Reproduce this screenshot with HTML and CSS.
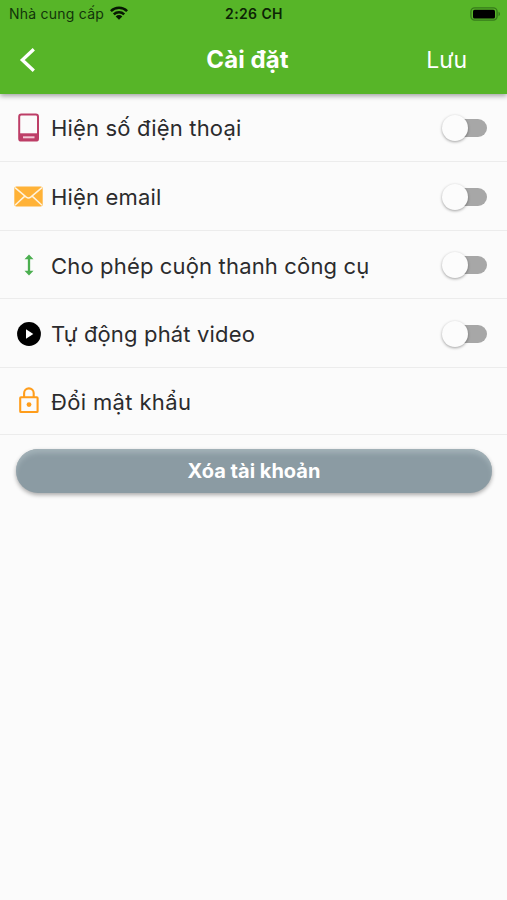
FILE: index.html
```html
<!DOCTYPE html>
<html lang="vi">
<head>
<meta charset="utf-8">
<title>Cài đặt</title>
<link rel="stylesheet" href="styles.css">
</head>
<body>
<header class="header">
  <div class="status">
    <div class="carrier">
      <span>Nhà cung cấp</span>
      <svg class="wifi" viewBox="0 0 18 14" width="18" height="14"><g fill="none" stroke="#071803" stroke-width="2.5"><path d="M.9 5.2a11.5 11.5 0 0 1 16.2 0"/><path d="M3.8 8.3a7.4 7.4 0 0 1 10.4 0"/></g><path fill="#071803" d="M5.7 10.4a4.7 4.7 0 0 1 6.6 0L9 13.7z"/></svg>
    </div>
    <span class="time">2:26 CH</span>
    <svg class="battery" viewBox="0 0 31 14" width="31" height="14"><rect x=".9" y=".9" width="26.2" height="12.2" rx="3.8" fill="none" stroke="#377b1b" stroke-width="1.4"/><rect x="3" y="2.7" width="22" height="8.8" rx="1.6"/><path fill="#377b1b" d="M28.5 4.8c2 .7 2 3.7 0 4.4z"/></svg>
  </div>
  <div class="nav">
    <svg class="back" viewBox="0 0 18 26" width="18" height="26"><path d="M15.8 2.2 4.3 13l11.5 10.8" fill="none" stroke="#fff" stroke-width="3.3"/></svg>
    <h1 class="title">Cài đặt</h1>
    <span class="save">Lưu</span>
  </div>
</header>
<main>
  <ul class="list">
    <li class="row first">
      <svg class="icon" viewBox="0 0 30 30" width="30" height="30"><rect x="5.2" y="1.6" width="18.8" height="26" rx="2.2" fill="none" stroke="#bd3e67" stroke-width="2"/><path fill="#bd3e67" d="M5 20.3h19.2v7.3H5z"/><path fill="#f3c9d6" d="M9 23.3h11.5v2H9z"/></svg>
      <span class="label">Hiện số điện thoại</span><span class="switch"></span>
    </li>
    <li class="row">
      <svg class="icon" viewBox="0 0 30 30" width="30" height="30"><rect x=".3" y="4.6" width="28.4" height="19.8" rx="2" fill="#ffb237"/><path d="m1 5.7 11.3 9.4q2.2 1.7 4.4 0L28 5.7M1 23.3l9.8-9.2M28 23.3l-9.8-9.2" fill="none" stroke="#fff3dc" stroke-width="1.5"/></svg>
      <span class="label">Hiện email</span><span class="switch"></span>
    </li>
    <li class="row mid">
      <svg class="icon" viewBox="0 0 30 30" width="30" height="30"><path d="M15 6v16" stroke="#4caf50" stroke-width="2.3"/><path fill="#4caf50" d="m15 3.5 4.5 4.7h-9zM15 24.5l4.5-4.7h-9z"/></svg>
      <span class="label">Cho phép cuộn thanh công cụ</span><span class="switch"></span>
    </li>
    <li class="row">
      <svg class="icon" viewBox="0 0 30 30" width="30" height="30"><circle cx="15" cy="15" r="11.9"/><path fill="#fff" d="M12 10.3v9.4l7.3-4.7z"/></svg>
      <span class="label">Tự động phát video</span><span class="switch"></span>
    </li>
    <li class="row last">
      <svg class="icon" viewBox="0 0 30 30" width="30" height="30"><g fill="none" stroke="#ff9d1b" stroke-width="2.1"><rect x="6.2" y="10.3" width="17.4" height="14.7" rx=".8"/><path d="M10.1 10V6.2a4.8 4.8 0 0 1 9.6 0V10"/></g><circle cx="15" cy="17.6" r="2.4" fill="#ff9d1b"/></svg>
      <span class="label">Đổi mật khẩu</span>
    </li>
  </ul>
  <button class="delete" type="button"><span>Xóa tài khoản</span></button>
</main>
</body>
</html>
```
FILE: styles.css
```css
* { box-sizing: border-box; }
body {
  margin: 0;
  min-height: 900px;
  background: #fbfbfb;
  font-family: Inter, "Noto Sans", sans-serif;
  color: #2b2b2d;
}
svg { display: block; flex: none; }
.header {
  position: relative;
  height: 94px;
  background: #57b528;
  box-shadow: 0 2px 5px rgba(0, 0, 0, .36);
}
.status {
  display: grid;
  grid-template-columns: 1fr auto 1fr;
  align-items: center;
  height: 27px;
  padding: 0 6px 0 9px;
  font-size: 14px;
  color: #12340a;
}
.carrier { display: flex; align-items: center; gap: 6px; letter-spacing: .23px; }
.wifi { margin-top: -2px; }
.time { margin-right: 2px; font-weight: 600; letter-spacing: .4px; color: #0c2405; }
.battery { justify-self: end; }
.nav {
  display: grid;
  grid-template-columns: 1fr auto 1fr;
  align-items: center;
  height: 66px;
  padding: 0 40px 0 18px;
  color: #fff;
}
.title { margin: 0 0 0 10px; font-size: 24px; font-weight: 700; line-height: 30px; letter-spacing: .1px; }
.save { justify-self: end; font-size: 23px; line-height: 30px; }
.list { margin: 0; padding: 0; list-style: none; }
.row {
  display: flex;
  align-items: center;
  height: 69px;
  padding: 0 20px 0 14px;
  border-bottom: 1px solid #ececec;
}
.row.first { height: 68px; }
.row.mid { height: 68px; }
.row.last { height: 67px; }
.row:nth-child(n + 2) { padding-top: 2px; }
.row:nth-child(n + 2) .switch { margin-top: -1px; }
.label { margin-left: 7px; font-size: 22px; line-height: 30px; letter-spacing: .16px; white-space: nowrap; }
.last .label { letter-spacing: .35px; }
.switch {
  position: relative;
  width: 41px;
  height: 18px;
  margin: 0 .5px 0 auto;
  border-radius: 9px;
  background: #a7a7a7;
}
.switch::before {
  content: "";
  position: absolute;
  left: -3.5px;
  top: -4px;
  width: 26px;
  height: 26px;
  border-radius: 50%;
  background: #fcfcfc;
  box-shadow: 0 1px 3px rgba(0, 0, 0, .36);
}
.delete {
  display: block;
  width: 476px;
  height: 44px;
  margin: 14px 0 0 16px;
  padding: 0;
  border: 0;
  border-radius: 22px;
  background: #8b9ba3;
  box-shadow: 0 2px 4px rgba(0, 0, 0, .33), inset 0 5px 5px -1px #a3b2b8;
  font: 700 20px/44px Inter, "Noto Sans", sans-serif;
  color: #fff;
}
```
